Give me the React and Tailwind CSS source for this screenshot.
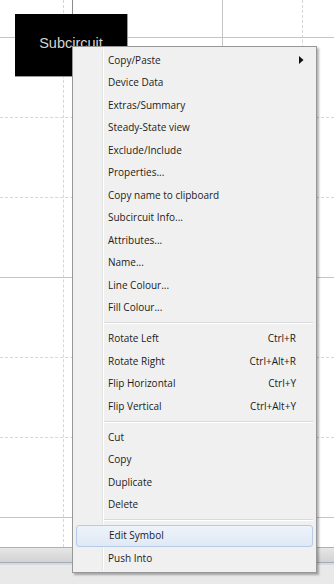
const GROUPS = [
  [
    { label: 'Copy/Paste', sub: true },
    { label: 'Device Data' },
    { label: 'Extras/Summary' },
    { label: 'Steady-State view' },
    { label: 'Exclude/Include' },
    { label: 'Properties...' },
    { label: 'Copy name to clipboard' },
    { label: 'Subcircuit Info...' },
    { label: 'Attributes...' },
    { label: 'Name...' },
    { label: 'Line Colour...' },
    { label: 'Fill Colour...' },
  ],
  [
    { label: 'Rotate Left', key: 'Ctrl+R' },
    { label: 'Rotate Right', key: 'Ctrl+Alt+R' },
    { label: 'Flip Horizontal', key: 'Ctrl+Y' },
    { label: 'Flip Vertical', key: 'Ctrl+Alt+Y' },
  ],
  [
    { label: 'Cut' },
    { label: 'Copy' },
    { label: 'Duplicate' },
    { label: 'Delete' },
  ],
  [
    { label: 'Edit Symbol', active: true },
    { label: 'Push Into' },
  ],
]

function MenuItem({ item }) {
  return (
    <div
      className={`relative z-10 flex h-[22.5px] items-center justify-between rounded-[3px] pl-[32px] pr-[17px] ${
        item.active
          ? 'border border-[#b5cbe6] bg-gradient-to-b from-[#eef3fa] to-[#dfe9f5] pl-[31px] pr-[16px]'
          : ''
      }`}
    >
      <span>{item.label}</span>
      {item.key && <span>{item.key}</span>}
      {item.sub && (
        <svg className="absolute right-[9px] top-1/2 -translate-y-1/2" width="5" height="8" viewBox="0 0 5 8">
          <path d="M0 0 L4.5 4 L0 8 Z" fill="#111" />
        </svg>
      )}
    </div>
  )
}

function Separator() {
  return (
    <div className="flex h-[8.5px] flex-col justify-center pl-[28px]">
      <div className="h-px bg-[#dadada]" />
      <div className="h-px bg-white" />
    </div>
  )
}

export default function App() {
  return (
    <div className="relative flex h-[584px] w-[334px] flex-col overflow-hidden bg-white font-['Segoe_UI','Open_Sans',sans-serif]">
      {/* schematic canvas */}
      <div className="relative flex-1 bg-white">
        {/* grid */}
        <div className="absolute left-0 right-0 top-[117px] border-t border-dashed border-[#d6d6d6]" />
        <div className="absolute left-0 right-0 top-[197px] border-t border-dashed border-[#d6d6d6]" />
        <div className="absolute left-0 right-0 top-[357px] border-t border-dashed border-[#d6d6d6]" />
        <div className="absolute left-0 right-0 top-[437px] border-t border-dashed border-[#d6d6d6]" />
        <div className="absolute bottom-0 top-0 left-[63px] border-l border-dashed border-[#d6d6d6]" />
        <div className="absolute bottom-0 top-0 left-[302px] border-l border-dashed border-[#d6d6d6]" />
        <div className="absolute left-0 right-0 top-[37px] h-px bg-[#c4c4c4]" />
        <div className="absolute left-0 right-0 top-[277px] h-px bg-[#c4c4c4]" />
        <div className="absolute left-0 right-0 top-[517px] h-px bg-[#c4c4c4]" />
        <div className="absolute bottom-0 top-0 left-[72px] w-px bg-[#8c8c8c]" />
        <div className="absolute bottom-0 top-0 left-[222px] w-px bg-[#c4c4c4]" />

        {/* subcircuit block */}
        <div className="absolute left-[15px] top-[14px] flex h-[63px] w-[113px] items-center justify-center border-b border-r border-[#9a9a9a] bg-black pb-[2px] font-['Liberation_Sans',Arial,sans-serif] text-[14.5px] text-[#d4d4d4]">
          Subcircuit
        </div>
      </div>

      {/* bottom strip */}
      <div className="flex h-[37px] flex-col">
        <div className="h-px bg-[#b0b0b0]" />
        <div className="h-[14px] bg-gradient-to-b from-[#e6e6e6] to-[#d2d2d2]" />
        <div className="h-px bg-[#a4acb8]" />
        <div className="h-[2px] bg-[#d6dae0]" />
        <div className="flex-1 bg-[#e9e9e9]" />
      </div>

      {/* context menu */}
      <div className="absolute left-[72px] top-[46px] w-[245px] border border-[#979797] bg-[#f0f0f0] px-[3px] py-[2px] text-[10px] text-[#1b1b1b] shadow-[2px_2px_2px_rgba(0,0,0,0.3)]">
        <div className="absolute bottom-[2px] top-[2px] left-[29px] w-px bg-[#e2e3e3]" />
        <div className="absolute bottom-[2px] top-[2px] left-[30px] w-px bg-white" />
        {GROUPS.map((group, gi) => (
          <div key={gi}>
            {gi > 0 && <Separator />}
            {group.map(item => (
              <MenuItem key={item.label} item={item} />
            ))}
          </div>
        ))}
      </div>
    </div>
  )
}
